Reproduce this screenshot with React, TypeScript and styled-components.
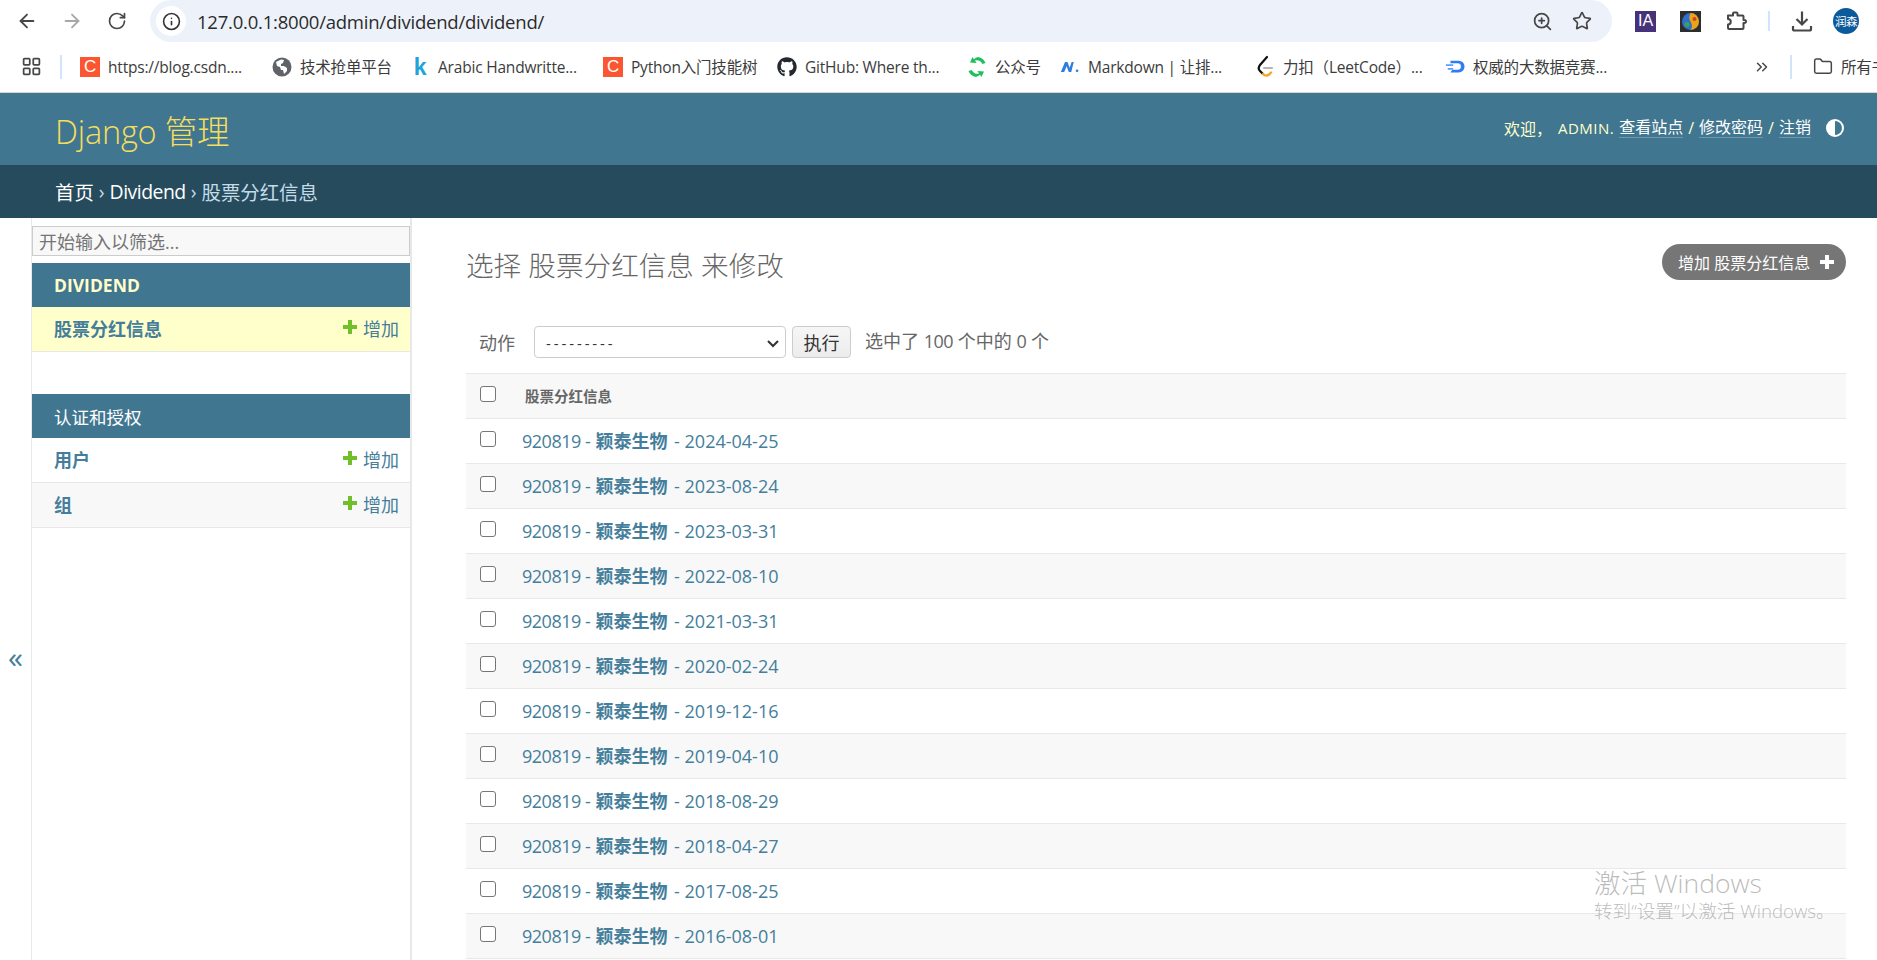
import React from "react";
import styled, { createGlobalStyle } from "styled-components";
import { ArrowLeft, ArrowRight, RotateCw, Info, ZoomIn, Star, Folder, ChevronsRight, LayoutGrid } from "lucide-react";
import { FaGithub } from "react-icons/fa";

const FONT = `"Open Sans", "Noto Sans CJK SC", sans-serif`;

const Global = createGlobalStyle`
  html, body { margin: 0; padding: 0; height: 960px; overflow: hidden; background: #fff; }
  body { font-family: ${FONT}; color: #333; }
  * { box-sizing: border-box; }
`;

const Page = styled.div`
  position: relative;
  width: 1877px;
  height: 960px;
  overflow: hidden;
  display: flex;
  flex-direction: column;
`;

const Toolbar = styled.div`
  height: 43px;
  display: flex;
  align-items: flex-start;
  background: #fff;
  flex: none;
`;
const NavButton = styled.div<{ $w: number; $c?: string }>`
  width: ${(p) => p.$w}px;
  height: 42px;
  display: flex;
  align-items: center;
  justify-content: center;
  color: ${(p) => p.$c || "#474747"};
  flex: none;
`;
const NavGroup = styled.div`
  display: flex;
  width: 150px;
  padding-left: 5px;
  flex: none;
`;
const UrlBar = styled.div`
  width: 1462px;
  height: 42px;
  background: #edf2fa;
  border-radius: 21px;
  display: flex;
  align-items: center;
  padding-left: 6px;
  padding-right: 10px;
  flex: none;
`;
const InfoChip = styled.div`
  width: 30px;
  height: 30px;
  border-radius: 50%;
  background: #fff;
  display: flex;
  align-items: center;
  justify-content: center;
  color: #333;
  flex: none;
`;
const UrlText = styled.div`
  margin-left: 11px;
  font-size: 18.5px;
  color: #2b2b2b;
  letter-spacing: -0.22px;
  flex: 1;
`;
const Extensions = styled.div`
  flex: 1;
  display: flex;
  align-items: center;
  height: 42px;
  padding-left: 23px;
`;
const ExtIA = styled.div`
  width: 21px;
  height: 21px;
  background: #46327a;
  color: #fff;
  font-size: 16px;
  font-family: "Liberation Sans", sans-serif;
  display: flex;
  align-items: center;
  justify-content: center;
`;
const ExtSlot = styled.div<{ $ml: number }>`
  margin-left: ${(p) => p.$ml}px;
  display: flex;
  color: #474747;
`;
const VSep = styled.div<{ $ml: number; $h?: number }>`
  width: 2px;
  height: ${(p) => p.$h || 20}px;
  background: #d3e3fd;
  margin-left: ${(p) => p.$ml}px;
  flex: none;
`;
const Avatar = styled.div`
  width: 26px;
  height: 26px;
  border-radius: 50%;
  background: #0b5a9c;
  color: #fff;
  font-size: 11.5px;
  letter-spacing: -0.5px;
  display: flex;
  align-items: center;
  justify-content: center;
  margin-left: 19px;
`;

const Bookmarks = styled.div`
  height: 50px;
  display: flex;
  align-items: center;
  background: #fff;
  border-bottom: 1px solid #d5d5d5;
  padding-bottom: 2px;
  flex: none;
  overflow: hidden;
  white-space: nowrap;
`;
const AppsIcon = styled.div`
  width: 60px;
  display: flex;
  justify-content: center;
  color: #474747;
  padding-left: 3px;
  flex: none;
`;
const Bookmark = styled.div<{ $w: number; $pl?: number }>`
  width: ${(p) => p.$w}px;
  padding-left: ${(p) => p.$pl ?? 0}px;
  display: flex;
  align-items: center;
  font-size: 15.5px;
  color: #3c3c3c;
  letter-spacing: -0.2px;
  flex: none;
`;
const BookmarkIcon = styled.div`
  width: 20px;
  height: 20px;
  margin-right: 8px;
  display: flex;
  align-items: center;
  justify-content: center;
  flex: none;
`;
const CsdnIcon = styled.div`
  width: 20px;
  height: 20px;
  background: #fc5531;
  color: #fff;
  font: 400 17px "Liberation Sans", sans-serif;
  display: flex;
  align-items: center;
  justify-content: center;
`;
const KaggleIcon = styled.div`
  color: #20a4d8;
  font: 700 23px "Liberation Sans", sans-serif;
  line-height: 20px;
`;
const MoreButton = styled.div`
  width: 26px;
  display: flex;
  justify-content: center;
  color: #474747;
  flex: none;
`;

const Header = styled.header`
  height: 72px;
  background: #417690;
  display: flex;
  align-items: center;
  justify-content: space-between;
  padding: 0 32px 0 55px;
  flex: none;
`;
const Brand = styled.div`
  font-size: 32.5px;
  font-weight: 300;
  color: #f5dd5d;
  letter-spacing: -0.2px;
  margin-top: 1px;
`;
const UserTools = styled.div`
  display: flex;
  align-items: center;
  font-size: 16px;
  color: #ffc;
  margin-top: -2px;
  gap: 5px;
`;
const Admin = styled.span`
  letter-spacing: 0.5px;
  font-size: 15px;
  margin-left: 1px;
`;
const ToolLink = styled.a`
  color: #fff;
  border-bottom: 1px solid rgba(255, 255, 255, 0.25);
  line-height: 19px;
`;
const ThemeIcon = styled.div`
  margin-left: 9px;
  display: flex;
`;
const Breadcrumbs = styled.div`
  height: 53px;
  background: #264b5d;
  display: flex;
  align-items: center;
  padding-left: 55px;
  font-size: 19.4px;
  color: #c4dce8;
  gap: 5px;
  flex: none;
`;
const CrumbLink = styled.a`
  color: #fff;
`;

const Body = styled.div`
  flex: 1;
  display: flex;
  min-height: 0;
`;
const ToggleCol = styled.div`
  width: 31px;
  flex: none;
  color: #447e9b;
  font-size: 30px;
  line-height: 30px;
  text-align: center;
  padding-top: 424px;
`;
const Sidebar = styled.aside`
  width: 381px;
  flex: none;
  border-left: 1px solid #e8e8e8;
  border-right: 2px solid #e8e8e8;
  padding-top: 8px;
`;
const FilterInput = styled.div`
  height: 30px;
  background: #f8f8f8;
  border: 1px solid #ccc;
  font-size: 18px;
  color: #757575;
  padding-left: 6px;
  display: flex;
  align-items: center;
  margin-bottom: 7px;
`;
const ModuleHead = styled.div`
  height: 44px;
  background: #417690;
  color: #ffc;
  font-size: 17.5px;
  font-weight: 700;
  padding-left: 22px;
  display: flex;
  align-items: center;
`;
const ModuleHeadPlain = styled(ModuleHead)`
  color: #fff;
  font-weight: 400;
`;
const ModuleGap = styled.div`
  height: 42px;
`;
const ModuleRow = styled.div<{ $bg: string }>`
  height: 45px;
  background: ${(p) => p.$bg};
  border-bottom: 1px solid #e8e8e8;
  display: flex;
  align-items: center;
  justify-content: space-between;
  padding: 0 11px 2px 22px;
`;
const ModelLink = styled.a`
  font-size: 18px;
  font-weight: 700;
  color: #447e9b;
`;
const AddLink = styled.a`
  display: flex;
  align-items: center;
  font-size: 18px;
  color: #447e9b;
  gap: 6px;
`;
const AddPlus = styled.span`
  display: flex;
  margin-top: -3px;
`;

const Main = styled.main`
  flex: 1;
  padding: 23px 31px 0 54px;
  min-width: 0;
`;
const TitleRow = styled.div`
  display: flex;
  justify-content: space-between;
  align-items: flex-start;
  height: 85px;
`;
const Title = styled.h1`
  margin: 0;
  font-size: 27.6px;
  font-weight: 300;
  color: #666;
  line-height: 48px;
`;
const AddButton = styled.a`
  height: 36px;
  margin-top: 3px;
  width: 184px;
  border-radius: 18px;
  background: #767676;
  color: #fff;
  font-size: 16px;
  display: flex;
  align-items: center;
  justify-content: space-between;
  padding: 0 12px 0 16px;
`;
const Actions = styled.div`
  height: 47px;
  display: flex;
  align-items: flex-start;
  font-size: 18px;
  color: #666;
  padding-left: 13px;
`;
const ActionLabel = styled.span`
  width: 55px;
  line-height: 34px;
  flex: none;
`;
const FakeSelect = styled.div`
  width: 252px;
  height: 32px;
  background: #fff;
  border: 1px solid #ccc;
  border-radius: 4px;
  display: flex;
  align-items: center;
  justify-content: space-between;
  padding: 2px 5px 0 11px;
  font-size: 15px;
  color: #333;
  letter-spacing: 2.9px;
  flex: none;
`;
const GoButton = styled.div`
  width: 59px;
  height: 32px;
  margin-left: 6px;
  background: linear-gradient(#f6f6f6, #ececec);
  border: 1px solid #ccc;
  border-radius: 4px;
  display: flex;
  align-items: center;
  justify-content: center;
  font-size: 18px;
  color: #333;
  flex: none;
`;
const Counter = styled.span`
  margin-left: 14px;
  line-height: 30px;
  color: #666;
`;
const Latin = styled.span<{ $s?: number }>`
  letter-spacing: ${(p) => p.$s ?? -0.5}px;
`;
const Table = styled.div`
  border-top: 1px solid #e8e8e8;
`;
const Row = styled.div<{ $alt?: boolean }>`
  height: 45px;
  display: flex;
  align-items: center;
  background: ${(p) => (p.$alt ? "#f8f8f8" : "#fff")};
  border-bottom: 1px solid #e8e8e8;
  padding: 0 0 2px 14px;
`;
const Check = styled.div`
  width: 16px;
  height: 16px;
  border: 1px solid #767676;
  border-radius: 3px;
  background: #fff;
  margin-top: -3px;
  flex: none;
`;
const HeadCell = styled.div`
  font-size: 14.5px;
  font-weight: 700;
  color: #666;
  margin-left: 29px;
`;
const ResultLink = styled.a`
  margin-left: 26px;
  font-size: 18px;
  color: #447e9b;
  white-space: nowrap;
`;
const ResultStrong = styled.b`
  font-weight: 700;
  margin: 0 2px 0 1px;
`;

const Watermark = styled.div`
  position: absolute;
  left: 1594px;
  top: 865px;
  color: rgba(120, 120, 120, 0.5);
  pointer-events: none;
`;
const WmTitle = styled.div`
  font-size: 26.5px;
  line-height: 36px;
  font-weight: 300;
`;
const WmSub = styled.div`
  font-size: 18.6px;
  line-height: 20px;
  font-weight: 300;
`;

const PlusIcon = ({ color, size = 14 }: { color: string; size?: number }) => (
  <svg width={size} height={size} viewBox="0 0 14 14">
    <path d="M5 0h4v5h5v4H9v5H5V9H0V5h5z" fill={color} />
  </svg>
);

const GlobeIcon = () => (
  <svg width="20" height="20" viewBox="0 0 20 20">
    <circle cx="10" cy="10" r="9.5" fill="#5f6368" />
    <path d="M9 2.5 4 5l1 4 3 1 1 3 2 0 1 4 3-3 0-3-3-2-3 0 0-2 2-1 1-3z" fill="#fff" />
  </svg>
);
const WechatIcon = () => (
  <svg width="20" height="22" viewBox="0 0 20 22">
    <path d="M11 1a9.5 9.5 0 0 1 7.5 6l-3.2 1A6 6 0 0 0 8 4.5l1.5 2.5L3 6.5 5.5 1 7 3.2A9 9 0 0 1 11 1z" fill="#1fbf5f" />
    <path d="M9 21a9.5 9.5 0 0 1-7.5-6l3.2-1A6 6 0 0 0 12 17.5L10.500 15l6.500.500L14.500 21 13 18.800A9 9 0 0 1 9 21z" fill="#1fbf5f" />
  </svg>
);
const NotionIcon = () => (
  <svg width="24" height="18" viewBox="0 0 24 18">
    <path d="M1 15 6 3h3l2.500 7L14 3h2.500l-3 12h-3L8 8l-3 7z" fill="#2e7de0" />
    <circle cx="20.500" cy="13.500" r="1.600" fill="#2e7de0" />
  </svg>
);
const LeetIcon = () => (
  <svg width="20" height="24" viewBox="0 0 20 24">
    <path d="M12 2 5 10c-2 2.500-2 4 0 6l3 3" fill="none" stroke="#111" strokeWidth="2.200" strokeLinecap="round" />
    <path d="M8 19c2 2 4 2 6 .500l2-2" fill="none" stroke="#f5a623" strokeWidth="2.400" strokeLinecap="round" />
    <path d="M9 13h8" fill="none" stroke="#b5b5b5" strokeWidth="2.200" strokeLinecap="round" />
  </svg>
);
const DpIcon = () => (
  <svg width="22" height="18" viewBox="0 0 22 18">
    <path d="M6 2h9a6 6 0 0 1 0 13H6l2-3h6a3 3 0 0 0 0-7H6z" fill="#2f7cf6" />
    <path d="M1 6h8v2H1zM3 10h6v2H3z" fill="#5aa0ff" />
  </svg>
);
const BrainIcon = () => (
  <svg width="21" height="21" viewBox="0 0 21 21">
    <rect width="21" height="21" fill="#2d2d2d" />
    <circle cx="10.500" cy="10.500" r="8.500" fill="#2f6fd0" />
    <path d="M10.500 2a8.500 8.500 0 0 1 0 17c2-3 2-5 0-8.500s-1-5.500 0-8.500z" fill="#eaa414" />
    <circle cx="7" cy="13.500" r="2.500" fill="#3fa34d" />
    <circle cx="14.500" cy="8" r="2" fill="#d83c2a" />
  </svg>
);
const PuzzleGlyph = () => (
  <svg width="24" height="24" viewBox="0 0 24 24" fill="none" stroke="#474747" strokeWidth="2" strokeLinejoin="round">
    <path d="M3 6.500h5V4.500a1 1 0 0 1 1-1h2.500a1 1 0 0 1 1 1v2h5a1 1 0 0 1 1 1v3.500h1a1.500 1.500 0 0 1 0 3h-1v5a1 1 0 0 1-1 1H4a1 1 0 0 1-1-1v-3.500a2.700 2.700 0 0 0 0-5.500z" />
  </svg>
);
const DownloadGlyph = () => (
  <svg width="24" height="24" viewBox="0 0 24 24" fill="none" stroke="#474747" strokeWidth="2.200">
    <path d="M12 2.500v13M6.500 10l5.500 5.500 5.500-5.500" />
    <path d="M3 17v3a1.500 1.500 0 0 0 1.500 1.500h15A1.500 1.500 0 0 0 21 20v-3" />
  </svg>
);
const ThemeGlyph = () => (
  <svg width="20" height="20" viewBox="0 0 20 20">
    <circle cx="10" cy="10" r="9" fill="#fff" />
    <path d="M10 3a7 7 0 0 0 0 14z" fill="#417690" transform="matrix(-1 0 0 1 20 0)" />
  </svg>
);

const RESULTS = [
  "2024-04-25", "2023-08-24", "2023-03-31", "2022-08-10", "2021-03-31", "2020-02-24",
  "2019-12-16", "2019-04-10", "2018-08-29", "2018-04-27", "2017-08-25", "2016-08-01",
];

export default function App() {
  return (
    <Page>
      <Global />
      <Toolbar>
        <NavGroup>
          <NavButton $w={44}><ArrowLeft size={22} strokeWidth={2} /></NavButton>
          <NavButton $w={45} $c="#a8a8a8"><ArrowRight size={22} strokeWidth={2} /></NavButton>
          <NavButton $w={45}><RotateCw size={20} strokeWidth={2} /></NavButton>
        </NavGroup>
        <UrlBar>
          <InfoChip><Info size={19} strokeWidth={2} /></InfoChip>
          <UrlText>127.0.0.1:8000/admin/dividend/dividend/</UrlText>
          <NavButton $w={40}><ZoomIn size={21} strokeWidth={2} /></NavButton>
          <NavButton $w={40}><Star size={20} strokeWidth={2} /></NavButton>
        </UrlBar>
        <Extensions>
          <ExtIA>IA</ExtIA>
          <ExtSlot $ml={24}><BrainIcon /></ExtSlot>
          <ExtSlot $ml={24}><PuzzleGlyph /></ExtSlot>
          <VSep $ml={19} />
          <ExtSlot $ml={20}><DownloadGlyph /></ExtSlot>
          <Avatar>润森</Avatar>
        </Extensions>
      </Toolbar>
      <Bookmarks>
        <AppsIcon><LayoutGrid size={21} strokeWidth={2} /></AppsIcon>
        <VSep $ml={0} $h={24} />
        <Bookmark $w={210} $pl={18}>
          <BookmarkIcon><CsdnIcon>C</CsdnIcon></BookmarkIcon>https://blog.csdn....
        </Bookmark>
        <Bookmark $w={138}>
          <BookmarkIcon><GlobeIcon /></BookmarkIcon>技术抢单平台
        </Bookmark>
        <Bookmark $w={193} $pl={0}>
          <BookmarkIcon><KaggleIcon>k</KaggleIcon></BookmarkIcon>Arabic Handwritte...
        </Bookmark>
        <Bookmark $w={174}>
          <BookmarkIcon><CsdnIcon>C</CsdnIcon></BookmarkIcon>Python入门技能树
        </Bookmark>
        <Bookmark $w={190}>
          <BookmarkIcon><FaGithub size={20} color="#24292f" /></BookmarkIcon>GitHub: Where th...
        </Bookmark>
        <Bookmark $w={93}>
          <BookmarkIcon><WechatIcon /></BookmarkIcon>公众号
        </Bookmark>
        <Bookmark $w={195}>
          <BookmarkIcon><NotionIcon /></BookmarkIcon>Markdown | 让排...
        </Bookmark>
        <Bookmark $w={190}>
          <BookmarkIcon><LeetIcon /></BookmarkIcon>力扣（LeetCode）...
        </Bookmark>
        <Bookmark $w={304}>
          <BookmarkIcon><DpIcon /></BookmarkIcon>权威的大数据竞赛...
        </Bookmark>
        <MoreButton><ChevronsRight size={18} strokeWidth={2} /></MoreButton>
        <VSep $ml={15} $h={24} />
        <Bookmark $w={90} $pl={21}>
          <BookmarkIcon><Folder size={21} strokeWidth={1.8} color="#474747" /></BookmarkIcon>所有书签
        </Bookmark>
      </Bookmarks>
      <Header>
        <Brand>Django 管理</Brand>
        <UserTools>
          <span>欢迎，</span>
          <Admin>ADMIN.</Admin>
          <ToolLink>查看站点</ToolLink>
          <span>/</span>
          <ToolLink>修改密码</ToolLink>
          <span>/</span>
          <ToolLink>注销</ToolLink>
          <ThemeIcon><ThemeGlyph /></ThemeIcon>
        </UserTools>
      </Header>
      <Breadcrumbs>
        <CrumbLink>首页</CrumbLink>
        <span>›</span>
        <CrumbLink><Latin>Dividend</Latin></CrumbLink>
        <span>›</span>
        <span>股票分红信息</span>
      </Breadcrumbs>
      <Body>
        <ToggleCol>«</ToggleCol>
        <Sidebar>
          <FilterInput>开始输入以筛选...</FilterInput>
          <ModuleHead>DIVIDEND</ModuleHead>
          <ModuleRow $bg="#ffc">
            <ModelLink>股票分红信息</ModelLink>
            <AddLink><AddPlus><PlusIcon color="#70bf2b" /></AddPlus>增加</AddLink>
          </ModuleRow>
          <ModuleGap />
          <ModuleHeadPlain>认证和授权</ModuleHeadPlain>
          <ModuleRow $bg="#fff">
            <ModelLink>用户</ModelLink>
            <AddLink><AddPlus><PlusIcon color="#70bf2b" /></AddPlus>增加</AddLink>
          </ModuleRow>
          <ModuleRow $bg="#f8f8f8">
            <ModelLink>组</ModelLink>
            <AddLink><AddPlus><PlusIcon color="#70bf2b" /></AddPlus>增加</AddLink>
          </ModuleRow>
        </Sidebar>
        <Main>
          <TitleRow>
            <Title>选择 股票分红信息 来修改</Title>
            <AddButton>增加 股票分红信息<PlusIcon color="#fff" /></AddButton>
          </TitleRow>
          <Actions>
            <ActionLabel>动作</ActionLabel>
            <FakeSelect>
              ---------
              <svg width="14" height="14" viewBox="0 0 14 14"><path d="M2 5l5 5 5-5" fill="none" stroke="#333" strokeWidth="2" /></svg>
            </FakeSelect>
            <GoButton>执行</GoButton>
            <Counter>选中了 <Latin>100</Latin> 个中的 <Latin>0</Latin> 个</Counter>
          </Actions>
          <Table>
            <Row $alt>
              <Check />
              <HeadCell>股票分红信息</HeadCell>
            </Row>
            {RESULTS.map((d, i) => (
              <Row key={d} $alt={i % 2 === 1}>
                <Check />
                <ResultLink>
                  <Latin>920819 - </Latin><ResultStrong>颖泰生物</ResultStrong><Latin $s={0}> - {d}</Latin>
                </ResultLink>
              </Row>
            ))}
          </Table>
        </Main>
      </Body>
      <Watermark>
        <WmTitle>激活 Windows</WmTitle>
        <WmSub>转到“设置”以激活 Windows。</WmSub>
      </Watermark>
    </Page>
  );
}
